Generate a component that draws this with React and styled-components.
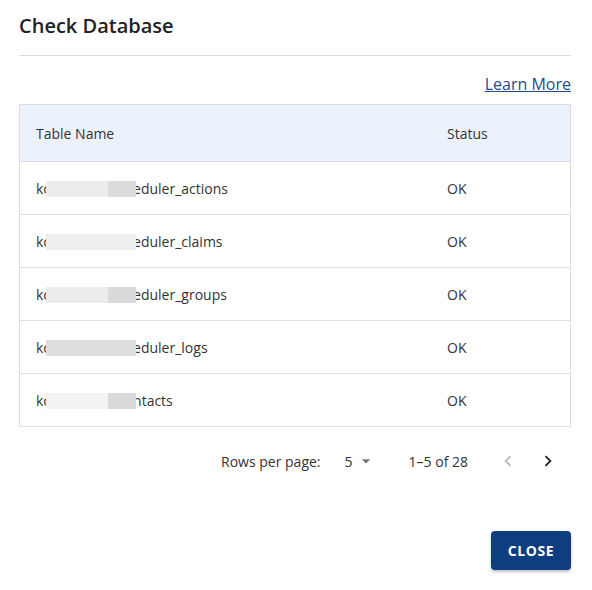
import React from "react";
import styled, { createGlobalStyle } from "styled-components";

const GlobalStyle = createGlobalStyle`
	html, body {
		margin: 0;
		padding: 0;
		background: #fff;
	}
	body {
		font-family: "Open Sans", "Noto Sans", Arial, sans-serif;
		color: #333;
	}
`;

const Dialog = styled.div`
	width: 592px;
	height: 590px;
	box-sizing: border-box;
	padding: 11px 21px 0 19px;
	display: flex;
	flex-direction: column;
`;

const Title = styled.h2`
	margin: 0;
	font-size: 20px;
	line-height: 30px;
	font-weight: 600;
	color: #222;
	padding-bottom: 14px;
	border-bottom: 1px solid #dedede;
`;

const LinkRow = styled.div`
	display: flex;
	justify-content: flex-end;
	margin: 16px 0 8px;
`;

const LearnMore = styled.a`
	font-size: 16px;
	line-height: 24px;
	color: #1f4a8c;
	text-decoration: underline;
	cursor: pointer;
`;

const Table = styled.table`
	width: 100%;
	border-collapse: collapse;
	border: 1px solid #dcdcdc;
	font-size: 14px;
	color: #333;
`;

const HeadRow = styled.tr`
	background: #ebf2fc;
	height: 57px;
	border-bottom: 1px solid #d6dbe4;
`;

const Row = styled.tr`
	height: 53px;
	border-bottom: 1px solid #e0e0e0;
`;

const Cell = styled.td`
	padding: 0 16px;
	text-align: left;
	font-weight: 400;
	width: ${(props) => props.width || "auto"};
`;

const Redact = styled.span`
	position: relative;
	display: inline-flex;
	vertical-align: -3px;
	height: 16px;
	margin: 0 -3px 0 -4px;
`;

const RedactPart = styled.span`
	display: block;
	height: 16px;
	width: ${(props) => props.w}px;
	background: ${(props) => props.c};
`;

const Pager = styled.div`
	display: flex;
	align-items: center;
	justify-content: flex-end;
	height: 52px;
	margin-top: 8px;
	padding-right: 3px;
	font-size: 14px;
	color: #333;
`;

const PagerLabel = styled.span`
	margin-right: 24px;
`;

const RowsSelect = styled.div`
	display: flex;
	align-items: center;
	gap: 3px;
	margin-right: 33px;
	svg {
		width: 20px;
		height: 20px;
		fill: #757575;
	}
`;

const Range = styled.span`
	margin-right: 20px;
`;

const NavButton = styled.button`
	border: none;
	background: transparent;
	padding: 0;
	width: 40px;
	height: 40px;
	display: flex;
	align-items: center;
	justify-content: center;
	cursor: pointer;
	svg {
		width: 22px;
		height: 22px;
		fill: ${(props) => (props.disabled ? "#bdbdbd" : "#222")};
	}
`;

const Footer = styled.div`
	display: flex;
	justify-content: flex-end;
	margin-top: 44px;
`;

const CloseButton = styled.button`
	width: 80px;
	height: 39px;
	border: none;
	border-radius: 4px;
	background: #0f3e80;
	color: #fff;
	font-family: "Open Sans", "Noto Sans", Arial, sans-serif;
	font-size: 14px;
	font-weight: 700;
	letter-spacing: 0.6px;
	box-shadow: 0 2px 3px rgba(0, 0, 0, 0.25);
	cursor: pointer;
`;

const rows = [
	{ pre: "kc", post: "eduler_actions", parts: [["#ececec", 62], ["#dcdcdc", 28]] },
	{ pre: "kc", post: "eduler_claims", parts: [["#eeeeee", 62], ["#eeeeee", 28]] },
	{ pre: "kc", post: "eduler_groups", parts: [["#ececec", 62], ["#dadada", 28]] },
	{ pre: "kc", post: "eduler_logs", parts: [["#dedede", 62], ["#dedede", 28]] },
	{ pre: "kc", post: "ntacts", parts: [["#f3f3f3", 62], ["#dadada", 28]] },
];

export default function App() {
	return (
		<>
			<GlobalStyle />
			<Dialog>
				<Title>Check Database</Title>
				<LinkRow>
					<LearnMore>Learn More</LearnMore>
				</LinkRow>
				<Table>
					<thead>
						<HeadRow>
							<Cell as="th">Table Name</Cell>
							<Cell as="th" width="107px">
								Status
							</Cell>
						</HeadRow>
					</thead>
					<tbody>
						{rows.map((r) => (
							<Row key={r.post}>
								<Cell>
									{r.pre}
									<Redact>
										{r.parts.map(([c, w], i) => (
											<RedactPart key={i} c={c} w={w} />
										))}
									</Redact>
									{r.post}
								</Cell>
								<Cell>OK</Cell>
							</Row>
						))}
					</tbody>
				</Table>
				<Pager>
					<PagerLabel>Rows per page:</PagerLabel>
					<RowsSelect>
						5
						<svg viewBox="0 0 24 24">
							<path d="M7 10l5 5 5-5z" />
						</svg>
					</RowsSelect>
					<Range>1–5 of 28</Range>
					<NavButton disabled>
						<svg viewBox="0 0 24 24">
							<path d="M15.41 16.59 10.83 12l4.58-4.59L14 6l-6 6 6 6 1.41-1.41z" />
						</svg>
					</NavButton>
					<NavButton>
						<svg viewBox="0 0 24 24">
							<path d="M8.59 16.59 13.17 12 8.59 7.41 10 6l6 6-6 6-1.41-1.41z" />
						</svg>
					</NavButton>
				</Pager>
				<Footer>
					<CloseButton>CLOSE</CloseButton>
				</Footer>
			</Dialog>
		</>
	);
}
